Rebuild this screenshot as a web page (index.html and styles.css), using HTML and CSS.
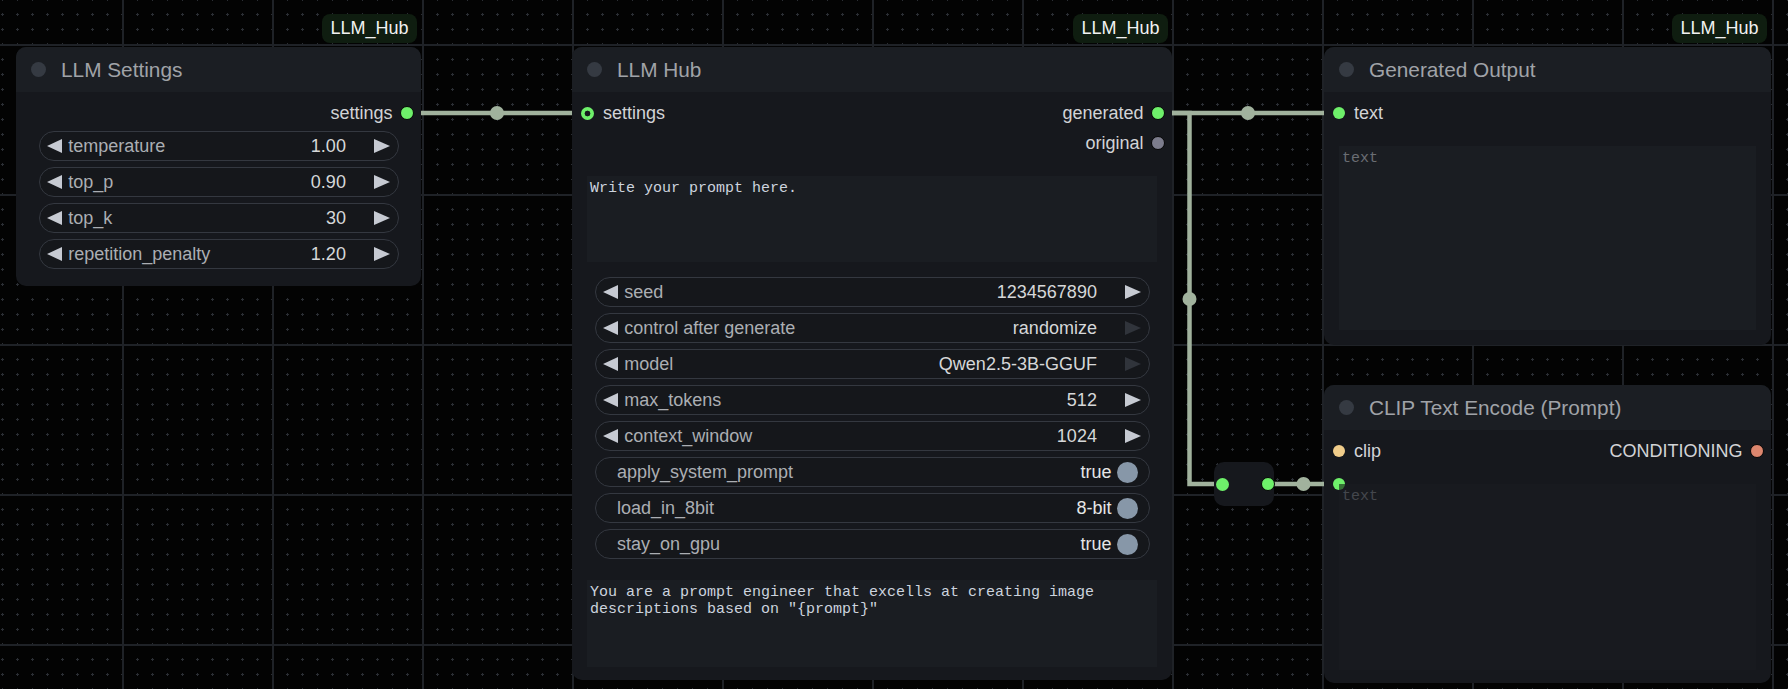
FILE: index.html
```html
<!DOCTYPE html>
<html>
<head>
<meta charset="utf-8">
<title>LLM Hub graph</title>
<link rel="stylesheet" href="styles.css">
</head>
<body>
<div class="canvas">
  <svg class="graph" width="1788" height="689" viewBox="0 0 1788 689">
    <defs>
      <pattern id="dots" x="115" y="37" width="15" height="15" patternUnits="userSpaceOnUse">
        <rect x="6" y="7" width="3" height="1" fill="#2b2e34"/>
        <rect x="7" y="6" width="1" height="3" fill="#2b2e34"/>
      </pattern>
      <pattern id="grid" x="0" y="0" width="150" height="150" patternUnits="userSpaceOnUse">
        <rect x="122" y="0" width="2" height="150" fill="#1f2227"/>
        <rect x="0" y="44" width="150" height="2" fill="#1f2227"/>
      </pattern>
    </defs>
    <rect width="1788" height="689" fill="url(#dots)"/>
    <rect width="1788" height="689" fill="url(#grid)"/>
    <path class="wire" d="M407 113H587"/>
    <circle class="knot" cx="497" cy="113" r="7"/>
    <path class="wire" d="M1157 113H1339"/>
    <circle class="knot" cx="1248" cy="113" r="7"/>
    <path class="wire" d="M1157 113H1189.5V484H1222"/>
    <circle class="knot" cx="1189.5" cy="299" r="7"/>
    <path class="wire" d="M1268 484H1339"/>
    <circle class="knot" cx="1303.5" cy="484" r="7"/>
  </svg>

  <!-- LLM Settings -->
  <div class="node n-settings">
    <div class="badge">LLM_Hub</div>
    <div class="title"><span class="tdot"></span><span>LLM Settings</span></div>
    <div class="body">
      <div class="slots">
        <div class="slot-row">
          <div class="slot-out"><span>settings</span><span class="dot dot-green dot-out"></span></div>
        </div>
      </div>
      <div class="widgets w-settings">
        <div class="widget">
          <svg class="arr" viewBox="0 0 15 14"><path d="M15 0V14L0 7Z"/></svg>
          <span class="wlabel">temperature</span><span class="wvalue">1.00</span>
          <svg class="arr arr-r" viewBox="0 0 16 14"><path d="M0 0V14L16 7Z"/></svg>
        </div>
        <div class="widget">
          <svg class="arr" viewBox="0 0 15 14"><path d="M15 0V14L0 7Z"/></svg>
          <span class="wlabel">top_p</span><span class="wvalue">0.90</span>
          <svg class="arr arr-r" viewBox="0 0 16 14"><path d="M0 0V14L16 7Z"/></svg>
        </div>
        <div class="widget">
          <svg class="arr" viewBox="0 0 15 14"><path d="M15 0V14L0 7Z"/></svg>
          <span class="wlabel">top_k</span><span class="wvalue">30</span>
          <svg class="arr arr-r" viewBox="0 0 16 14"><path d="M0 0V14L16 7Z"/></svg>
        </div>
        <div class="widget">
          <svg class="arr" viewBox="0 0 15 14"><path d="M15 0V14L0 7Z"/></svg>
          <span class="wlabel">repetition_penalty</span><span class="wvalue">1.20</span>
          <svg class="arr arr-r" viewBox="0 0 16 14"><path d="M0 0V14L16 7Z"/></svg>
        </div>
      </div>
    </div>
  </div>

  <!-- LLM Hub -->
  <div class="node n-hub">
    <div class="badge">LLM_Hub</div>
    <div class="title"><span class="tdot"></span><span>LLM Hub</span></div>
    <div class="body">
      <div class="slots">
        <div class="slot-row">
          <div class="slot-in"><span class="dot dot-ring"></span><span>settings</span></div>
          <div class="slot-out"><span>generated</span><span class="dot dot-green dot-out"></span></div>
        </div>
        <div class="slot-row">
          <div class="slot-out"><span>original</span><span class="dot dot-gray dot-out"></span></div>
        </div>
      </div>
      <div class="textarea ta-prompt">Write your prompt here.</div>
      <div class="widgets w-hub">
        <div class="widget">
          <svg class="arr" viewBox="0 0 15 14"><path d="M15 0V14L0 7Z"/></svg>
          <span class="wlabel">seed</span><span class="wvalue">1234567890</span>
          <svg class="arr arr-r" viewBox="0 0 16 14"><path d="M0 0V14L16 7Z"/></svg>
        </div>
        <div class="widget">
          <svg class="arr" viewBox="0 0 15 14"><path d="M15 0V14L0 7Z"/></svg>
          <span class="wlabel">control after generate</span><span class="wvalue">randomize</span>
          <svg class="arr arr-r arr-dim" viewBox="0 0 16 14"><path d="M0 0V14L16 7Z"/></svg>
        </div>
        <div class="widget">
          <svg class="arr" viewBox="0 0 15 14"><path d="M15 0V14L0 7Z"/></svg>
          <span class="wlabel">model</span><span class="wvalue">Qwen2.5-3B-GGUF</span>
          <svg class="arr arr-r arr-dim" viewBox="0 0 16 14"><path d="M0 0V14L16 7Z"/></svg>
        </div>
        <div class="widget">
          <svg class="arr" viewBox="0 0 15 14"><path d="M15 0V14L0 7Z"/></svg>
          <span class="wlabel">max_tokens</span><span class="wvalue">512</span>
          <svg class="arr arr-r" viewBox="0 0 16 14"><path d="M0 0V14L16 7Z"/></svg>
        </div>
        <div class="widget">
          <svg class="arr" viewBox="0 0 15 14"><path d="M15 0V14L0 7Z"/></svg>
          <span class="wlabel">context_window</span><span class="wvalue">1024</span>
          <svg class="arr arr-r" viewBox="0 0 16 14"><path d="M0 0V14L16 7Z"/></svg>
        </div>
        <div class="widget toggle">
          <span class="wlabel">apply_system_prompt</span><span class="wvalue">true</span><span class="knob"></span>
        </div>
        <div class="widget toggle">
          <span class="wlabel">load_in_8bit</span><span class="wvalue">8-bit</span><span class="knob"></span>
        </div>
        <div class="widget toggle">
          <span class="wlabel">stay_on_gpu</span><span class="wvalue">true</span><span class="knob"></span>
        </div>
      </div>
      <div class="textarea ta-system">You are a prompt engineer that excells at creating image descriptions based on "{prompt}"</div>
    </div>
  </div>

  <!-- Reroute -->
  <div class="reroute">
    <span class="dot dot-green rr-in"></span>
    <span class="dot dot-green dot-out rr-out"></span>
  </div>

  <!-- Generated Output -->
  <div class="node n-output">
    <div class="badge">LLM_Hub</div>
    <div class="title"><span class="tdot"></span><span>Generated Output</span></div>
    <div class="body">
      <div class="slots">
        <div class="slot-row">
          <div class="slot-in"><span class="dot dot-green"></span><span>text</span></div>
        </div>
      </div>
      <div class="textarea ta-output"><span class="placeholder">text</span></div>
    </div>
  </div>

  <!-- CLIP Text Encode -->
  <div class="node n-clip">
    <div class="title"><span class="tdot"></span><span>CLIP Text Encode (Prompt)</span></div>
    <div class="body">
      <div class="slots">
        <div class="slot-row">
          <div class="slot-in"><span class="dot dot-clip"></span><span>clip</span></div>
          <div class="slot-out"><span>CONDITIONING</span><span class="dot dot-cond"></span></div>
        </div>
      </div>
      <div class="textarea ta-clip"><span class="dot dot-widget-in"></span><span class="placeholder dim">text</span></div>
    </div>
  </div>
</div>
</body>
</html>
```

FILE: styles.css
```css
* { box-sizing: border-box; }

html, body {
  margin: 0;
  padding: 0;
  background: #030303;
}

body {
  width: 1788px;
  height: 689px;
  overflow: hidden;
  font-family: "Liberation Sans", Arial, sans-serif;
}

.canvas {
  position: relative;
  width: 1788px;
  height: 689px;
  overflow: hidden;
  background: #030303;
}

.graph {
  position: absolute;
  left: 0;
  top: 0;
}

.wire {
  fill: none;
  stroke: #a1b29d;
  stroke-width: 4.5;
}

.knot { fill: #a1b29d; }

/* ---------- nodes ---------- */
.node {
  position: absolute;
  background: #16181d;
  border-radius: 10px;
  display: flex;
  flex-direction: column;
}

.n-settings { left: 16px; top: 47px; width: 405px; height: 239px; }
.n-hub { left: 572px; top: 47px; width: 600px; height: 633px; }
.n-output { left: 1324px; top: 47px; width: 447px; height: 298px; }
.n-clip { left: 1324px; top: 385px; width: 447px; height: 298px; }

.badge {
  position: absolute;
  top: -33px;
  right: 4px;
  width: 95px;
  height: 29px;
  border-radius: 8px;
  background: #0f1d10;
  color: #f2f2f2;
  font-size: 18px;
  display: flex;
  align-items: center;
  justify-content: center;
}

.title {
  height: 45px;
  flex: none;
  background: #1b1e23;
  border-radius: 10px 10px 0 0;
  display: flex;
  align-items: center;
  gap: 15px;
  padding-left: 15px;
  font-size: 20.8px;
  color: #a0a3a8;
}

.tdot {
  width: 15px;
  height: 15px;
  border-radius: 50%;
  background: #353a42;
}

.body {
  padding-top: 6px;
  display: flex;
  flex-direction: column;
}

/* ---------- slots ---------- */
.slot-row {
  height: 30px;
  display: flex;
  align-items: center;
  justify-content: space-between;
  font-size: 18px;
  color: #d2d3d6;
}

.slot-in {
  display: flex;
  align-items: center;
  gap: 9px;
  padding-left: 9px;
}

.slot-out {
  margin-left: auto;
  display: flex;
  align-items: center;
  gap: 7px;
  padding-right: 7.5px;
}

.dot {
  display: block;
  width: 12px;
  height: 12px;
  border-radius: 50%;
  flex: none;
}

.dot-green { background: #6ef06a; }
.dot-out {
  width: 14px;
  height: 14px;
  border: 1.5px solid #050505;
}
.dot-gray { background: #7c7c8c; }
.dot-ring { background: radial-gradient(circle, #16181d 0 2.6px, #6ef06a 3.2px); width: 13px; height: 13px; }
.dot-clip { background: #f0cc8a; }
.dot-cond { background: #dd866e; border: 1.5px solid #050505; width: 14px; height: 14px; }

/* ---------- widgets ---------- */
.widgets {
  display: flex;
  flex-direction: column;
  gap: 6px;
  margin: 0 22.5px;
}

.w-settings { margin-top: 3px; }
.w-hub { margin-top: 15px; }

.widget {
  height: 30px;
  border: 1px solid #343840;
  border-radius: 15px;
  background: #15171b;
  display: flex;
  align-items: center;
  padding: 0 8px 0 7.7px;
  font-size: 18px;
  white-space: nowrap;
}

.arr {
  width: 15px;
  height: 14px;
  flex: none;
  fill: #c6cad2;
}

.arr-r { width: 16px; }
.arr-dim { fill: #30343b; }

.wlabel {
  margin-left: 6px;
  color: #abaeb3;
}

.wvalue {
  flex: 1;
  text-align: right;
  margin-right: 27.6px;
  color: #d6d7d9;
}

.widget.toggle {
  padding: 0 11px 0 21.5px;
}

.toggle .wlabel { margin-left: 0; }
.toggle .wvalue {
  margin-right: 5px;
  color: #e6e6e6;
}

.knob {
  width: 21px;
  height: 21px;
  border-radius: 50%;
  background: #8797a8;
  flex: none;
}

/* ---------- text areas ---------- */
.textarea {
  position: relative;
  margin: 18px 15px 0;
  background: #1a1d22;
  font-family: "Liberation Mono", "Courier New", monospace;
  font-size: 15px;
  line-height: 17px;
  color: #ccd3de;
  padding: 4px 3px;
  white-space: pre-wrap;
  word-wrap: break-word;
}

.ta-prompt { height: 86px; }
.ta-system { height: 87px; margin-top: 21px; }
.ta-output { height: 184px; }
.ta-clip { height: 186px; background: #181a1f; }

.placeholder { color: #6a6d73; }
.placeholder.dim { color: #44474d; }

.dot-widget-in {
  position: absolute;
  left: -6.5px;
  top: -6px;
  background: conic-gradient(from 90deg, #347034 0 90deg, #6ef06a 90deg 360deg);
}

/* ---------- reroute ---------- */
.reroute {
  position: absolute;
  left: 1214px;
  top: 462px;
  width: 60px;
  height: 44px;
  border-radius: 10px;
  background: #16181d;
  display: flex;
  align-items: center;
  justify-content: space-between;
  padding-left: 1.5px;
}

.rr-in { width: 13px; height: 13px; }
.rr-out { margin-right: -1px; }
```
